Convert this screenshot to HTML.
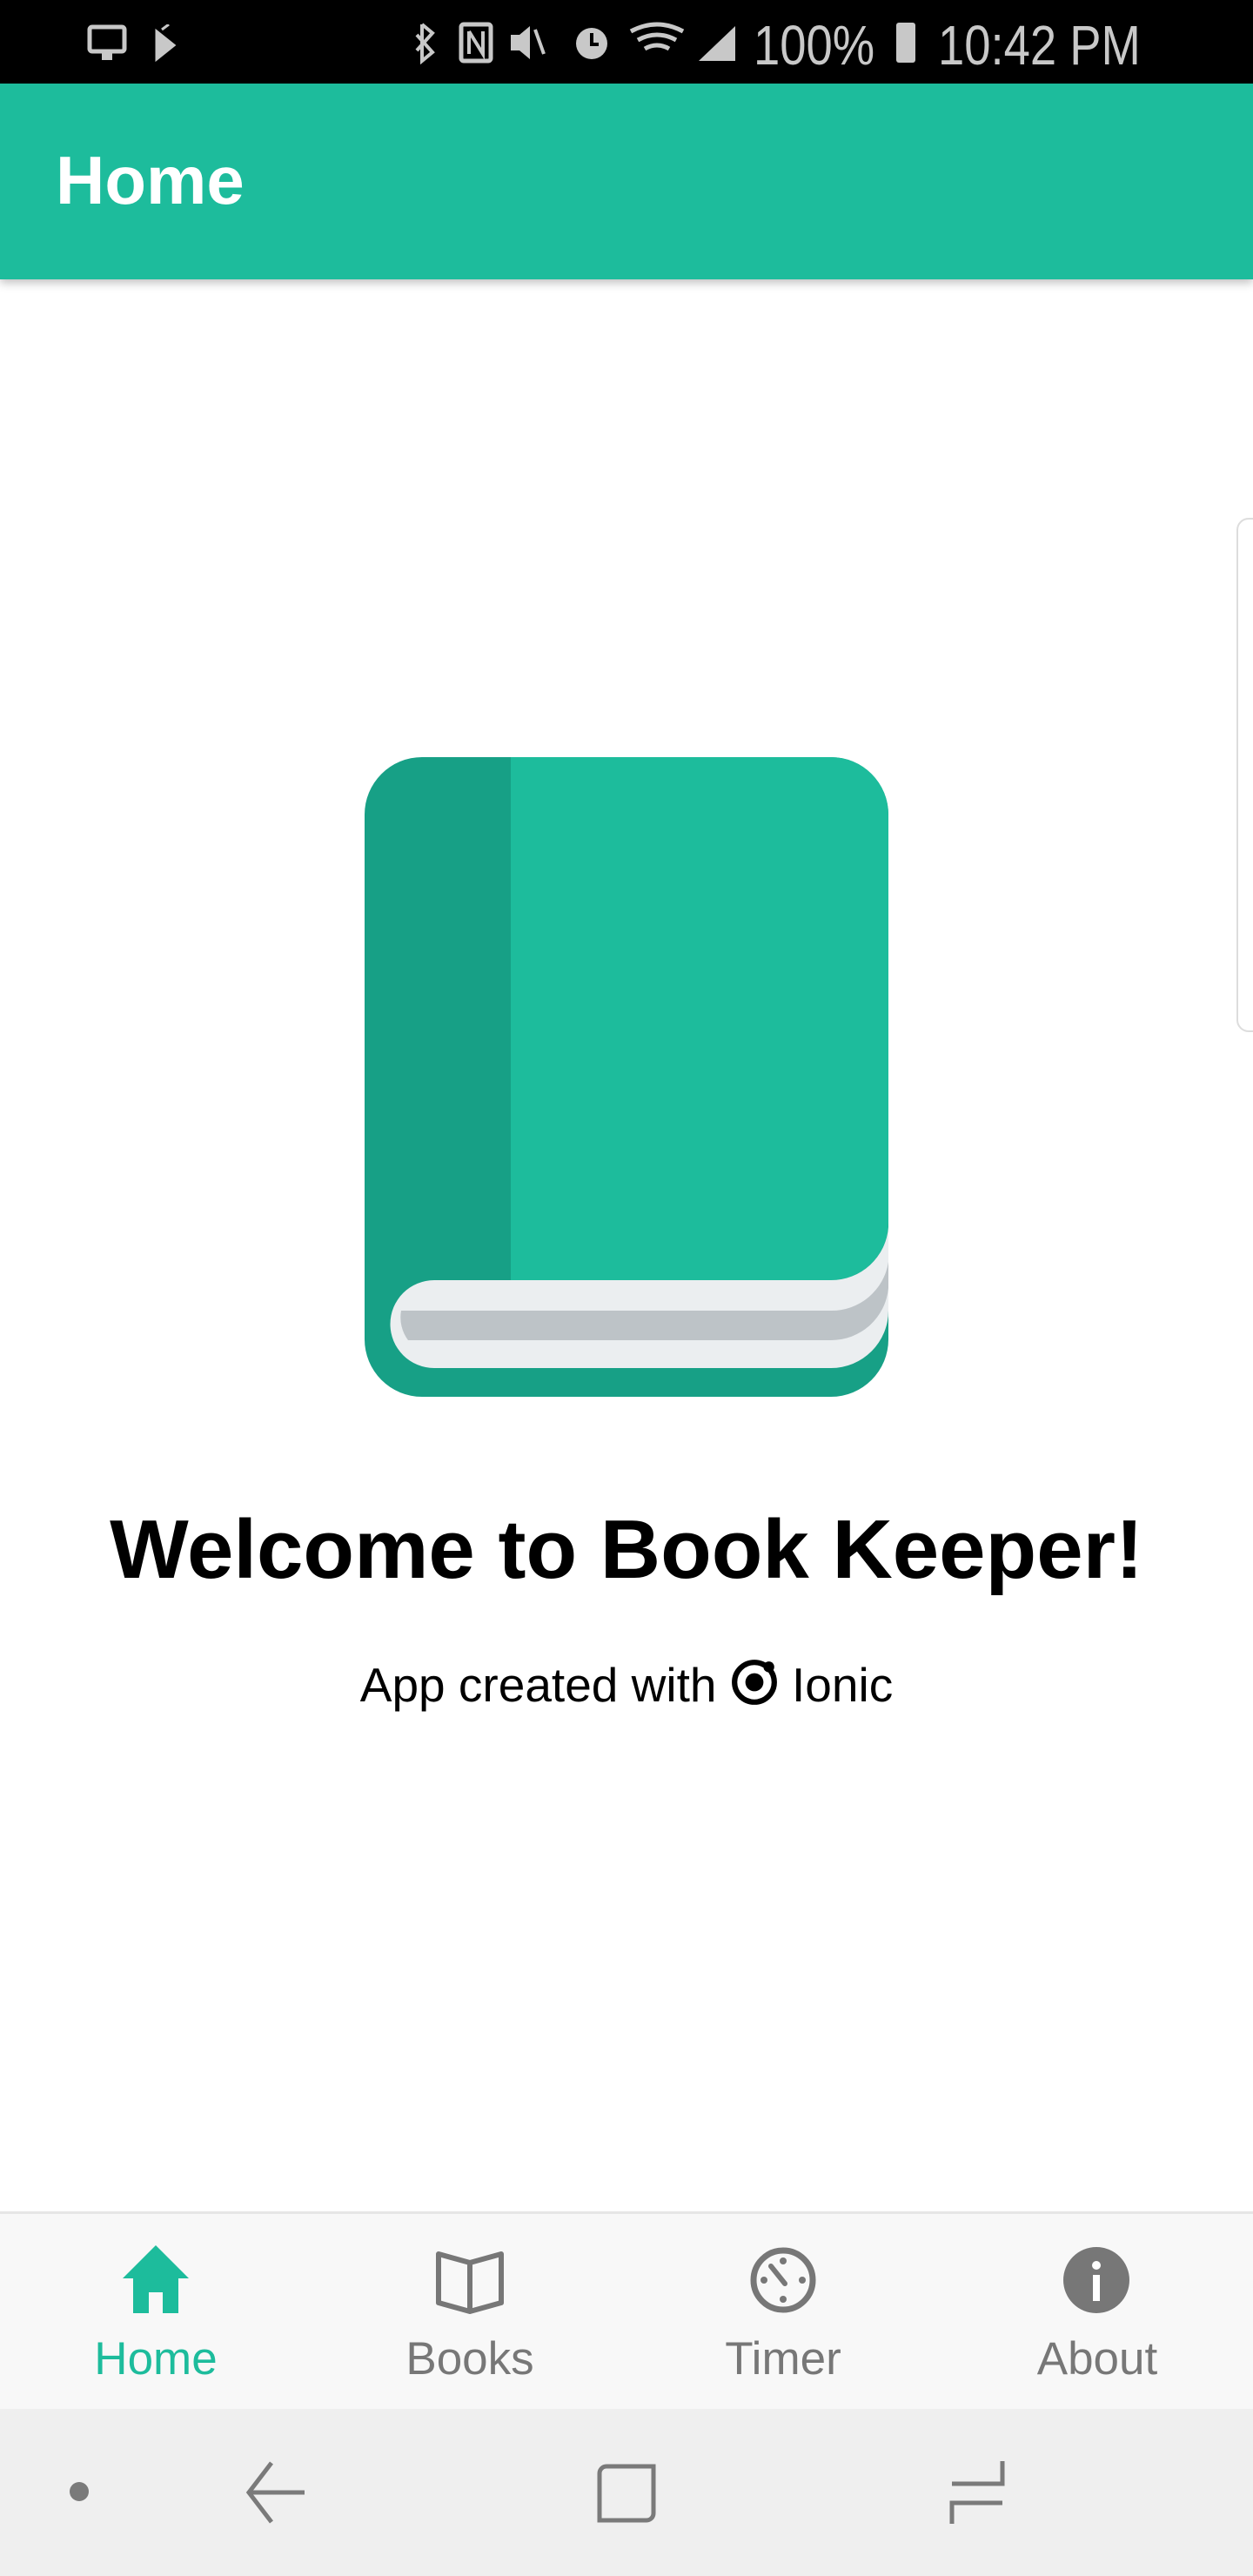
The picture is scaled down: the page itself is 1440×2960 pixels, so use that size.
<!DOCTYPE html>
<html><head><meta charset="utf-8"><style>
*{margin:0;padding:0;box-sizing:border-box}
body{width:1440px;height:2960px;position:relative;background:#fff;font-family:"Liberation Sans",sans-serif;overflow:hidden}
.abs{position:absolute}
#status{left:0;top:0;width:1440px;height:96px;background:#000}
#header{left:0;top:96px;width:1440px;height:225px;background:#1dbc9c;box-shadow:0 4px 10px rgba(0,0,0,.25)}
.st{color:#c8c8c8;font-size:64px;top:20px;line-height:1;transform-origin:left top;transform:scaleX(.85)}
#title{left:0;width:1440px;top:1728px;text-align:center;font-size:96px;font-weight:bold;color:#000;line-height:1.1}
#sub{left:0;width:1440px;top:1903px;text-align:center;font-size:55px;color:#000;line-height:1.2}
#tabs{left:0;top:2541px;width:1440px;height:227px;background:#f8f8f8;border-top:3px solid #e6e6e6}
#nav{left:0;top:2768px;width:1440px;height:192px;background:#efefef}
.lbl{position:absolute;top:2682px;width:300px;text-align:center;font-size:53px;color:#777;line-height:1.1}
</style></head><body>
<div id="status" class="abs">
 <svg class="abs" style="left:100px;top:28px" width="120" height="44" viewBox="0 0 120 44">
  <rect x="3" y="3" width="40" height="28" rx="3" fill="none" stroke="#c8c8c8" stroke-width="5"/>
  <rect x="17" y="33" width="12" height="8" fill="#c8c8c8"/>
  <path d="M80 8 L80 40 L100 24 Z M86 6 L94 0" fill="#c8c8c8" stroke="#c8c8c8" stroke-width="3"/>
 </svg>
 <svg class="abs" style="left:475px;top:24px" width="380" height="50" viewBox="0 0 380 50">
  <path d="M10 4 L22 14 L4 34 M10 4 L10 46 L22 36 L4 16" fill="none" stroke="#c8c8c8" stroke-width="4"/>
  <rect x="55" y="4" width="34" height="42" rx="3" fill="none" stroke="#c8c8c8" stroke-width="5"/>
  <path d="M64 12 L64 38 M64 12 L80 38 L80 12" fill="none" stroke="#c8c8c8" stroke-width="4"/>
  <path d="M112 16 L122 16 L134 6 L134 44 L122 34 L112 34 Z" fill="#c8c8c8"/>
  <path d="M140 10 L150 38" stroke="#c8c8c8" stroke-width="4"/>
  <circle cx="205" cy="26" r="18" fill="#c8c8c8"/><path d="M205 14 V27 H213" stroke="#000" stroke-width="4" fill="none"/>
  <path d="M250 12 Q280 -4 310 12 M258 22 Q280 10 302 22 M266 32 Q280 24 294 32" stroke="#c8c8c8" stroke-width="5" fill="none"/>
  <path d="M328 46 L370 46 L370 6 Z" fill="#c8c8c8"/>
 </svg>
 <div class="abs st" style="left:866px">100%</div>
 <div class="abs" style="left:1030px;top:26px;width:22px;height:46px;background:#c8c8c8;border-radius:3px"></div>
 <div class="abs st" style="left:1078px">10:42 PM</div>
</div>
<div id="header" class="abs"></div>
<div class="abs" style="left:0;top:0"><h1 style="position:absolute;left:64px;top:168px;font-size:78px;font-weight:bold;color:#fff;line-height:1;white-space:nowrap">Home</h1></div>
<div class="abs" style="left:1421px;top:595px;width:40px;height:591px;border:2px solid #ddd;border-radius:14px;background:#fff"></div>
<svg class="abs" style="left:419px;top:870px" width="602" height="735" viewBox="0 0 602 735">
 <rect x="0" y="0" width="602" height="735" rx="66" fill="#17a086"/>
 <path d="M168 0 H536 A66 66 0 0 1 602 66 V535 A66 66 0 0 1 536 601 H168 Z" fill="#1dbc9c"/>
 <path d="M602 540 V636 A66 66 0 0 1 536 702 H80 A44 44 0 0 1 80 601 H536 A66 66 0 0 0 602 540 Z" fill="#ebeef0"/>
 <path d="M602 580 V610 A66 66 0 0 1 536 670 H50 A44 44 0 0 1 42 636 L50 636 H536 A66 66 0 0 0 602 580 Z" fill="#bdc3c7"/>
</svg>
<div id="title" class="abs">Welcome to Book Keeper!</div>
<div id="sub" class="abs">App created with <svg width="56" height="56" viewBox="0 0 54 54" style="vertical-align:-6px"><circle cx="27" cy="27" r="22" fill="none" stroke="#000" stroke-width="6"/><circle cx="27" cy="27" r="10" fill="#000"/><circle cx="43" cy="10" r="6" fill="#000"/></svg> Ionic</div>
<div id="tabs" class="abs"></div>
<svg class="abs" style="left:139px;top:2578px" width="80" height="84" viewBox="0 0 80 84"><path d="M40 2 L78 40 L66 40 L66 80 L48 80 L48 56 L32 56 L32 80 L14 80 L14 40 L2 40 Z" fill="#1dbc9c"/></svg>
<svg class="abs" style="left:500px;top:2584px" width="80" height="76" viewBox="0 0 80 76"><path d="M4 6 L4 62 L40 72 L76 62 L76 6 L40 16 Z M40 16 V72" fill="none" stroke="#777" stroke-width="6" stroke-linejoin="round"/></svg>
<svg class="abs" style="left:860px;top:2580px" width="80" height="80" viewBox="0 0 80 80"><circle cx="40" cy="40" r="34" fill="none" stroke="#777" stroke-width="7"/><path d="M26 24 L42 44" stroke="#777" stroke-width="6" stroke-linecap="round"/><circle cx="40" cy="18" r="4" fill="#777"/><circle cx="40" cy="62" r="4" fill="#777"/><circle cx="18" cy="40" r="4" fill="#777"/><circle cx="62" cy="40" r="4" fill="#777"/></svg>
<svg class="abs" style="left:1220px;top:2580px" width="80" height="80" viewBox="0 0 80 80"><circle cx="40" cy="40" r="38" fill="#777"/><rect x="36" y="34" width="8" height="30" fill="#fff"/><circle cx="40" cy="23" r="5" fill="#fff"/></svg>
<div class="lbl" style="left:29px;color:#1dbc9c">Home</div>
<div class="lbl" style="left:390px">Books</div>
<div class="lbl" style="left:750px">Timer</div>
<div class="lbl" style="left:1111px">About</div>
<div id="nav" class="abs"></div>
<div class="abs" style="left:80px;top:2852px;width:22px;height:22px;border-radius:50%;background:#7a7a7a"></div>
<svg class="abs" style="left:280px;top:2826px" width="80" height="76" viewBox="0 0 80 76"><path d="M32 4 L6 38 L32 72 M6 38 H70" fill="none" stroke="#7a7a7a" stroke-width="5"/></svg>
<svg class="abs" style="left:685px;top:2830px" width="70" height="70" viewBox="0 0 70 70"><path d="M4 66 V12 A8 8 0 0 1 12 4 H66 V58 A8 8 0 0 1 58 66 Z" fill="none" stroke="#7a7a7a" stroke-width="5"/></svg>
<svg class="abs" style="left:1090px;top:2826px" width="70" height="76" viewBox="0 0 70 76"><path d="M62 2 V28 H4 M4 74 V50 H62" fill="none" stroke="#7a7a7a" stroke-width="5"/></svg>
</body></html>
